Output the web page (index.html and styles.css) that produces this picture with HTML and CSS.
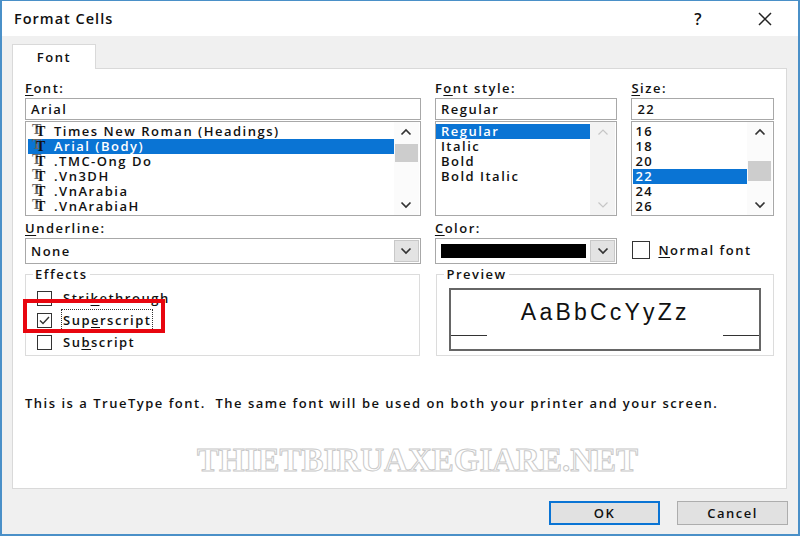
FILE: index.html
```html
<!DOCTYPE html>
<html>
	<head>
		<link rel="stylesheet" href="styles.css">
	</head>
	<body>
		<div class="window">
			<div class="titlebar">
				<span class="title">Format Cells</span>
				<span class="help">?</span>
				<span class="close">
					<svg width="14" height="14" viewBox="0 0 14 14"><path d="M1 1L13 13M13 1L1 13" stroke="#222" stroke-width="1.5" fill="none"/></svg>
				</span>
			</div>
			<div class="frame">
				<div class="tabs"><div class="tab">Font</div></div>
				<div class="panel">
					<div class="row">
						<div class="col col_font">
							<div class="label"><u>F</u>ont:</div>
							<div class="textbox">Arial</div>
							<div class="listbox">
								<ul class="items font_items">
									<li><span class="tt">T</span>Times New Roman (Headings)</li>
									<li class="sel"><span class="tt">T</span>Arial (Body)</li>
									<li><span class="tt">T</span>.TMC-Ong Do</li>
									<li><span class="tt">T</span>.Vn3DH</li>
									<li><span class="tt">T</span>.VnArabia</li>
									<li><span class="tt">T</span>.VnArabiaH</li>
								</ul>
								<div class="scrollbar">
									<div class="arrow"><svg width="12" height="8" viewBox="0 0 12 8"><polyline points="1.5,6.5 6,2 10.5,6.5" /></svg></div>
									<div class="track"><div class="thumb thumb_font"></div></div>
									<div class="arrow"><svg width="12" height="8" viewBox="0 0 12 8"><polyline points="1.5,1.5 6,6 10.5,1.5" /></svg></div>
								</div>
							</div>
						</div>
						<div class="col col_style">
							<div class="label">F<u>o</u>nt style:</div>
							<div class="textbox">Regular</div>
							<div class="listbox">
								<ul class="items style_items">
									<li class="sel">Regular</li>
									<li>Italic</li>
									<li>Bold</li>
									<li>Bold Italic</li>
								</ul>
								<div class="scrollbar disabled">
									<div class="arrow"><svg width="12" height="8" viewBox="0 0 12 8"><polyline points="1.5,6.5 6,2 10.5,6.5" /></svg></div>
									<div class="track"></div>
									<div class="arrow"><svg width="12" height="8" viewBox="0 0 12 8"><polyline points="1.5,1.5 6,6 10.5,1.5" /></svg></div>
								</div>
							</div>
						</div>
						<div class="col col_size">
							<div class="label"><u>S</u>ize:</div>
							<div class="textbox">22</div>
							<div class="listbox">
								<ul class="items size_items">
									<li>16</li>
									<li>18</li>
									<li>20</li>
									<li class="sel">22</li>
									<li>24</li>
									<li>26</li>
								</ul>
								<div class="scrollbar">
									<div class="arrow"><svg width="12" height="8" viewBox="0 0 12 8"><polyline points="1.5,6.5 6,2 10.5,6.5" /></svg></div>
									<div class="track"><div class="thumb thumb_size"></div></div>
									<div class="arrow"><svg width="12" height="8" viewBox="0 0 12 8"><polyline points="1.5,1.5 6,6 10.5,1.5" /></svg></div>
								</div>
							</div>
						</div>
					</div>

					<div class="row row_mid">
						<div class="col col_font">
							<div class="label"><u>U</u>nderline:</div>
							<div class="combo">
								<span class="combo_text">None</span>
								<span class="drop"><svg width="12" height="8" viewBox="0 0 12 8"><polyline points="1.5,1.5 6,6 10.5,1.5" /></svg></span>
							</div>
						</div>
						<div class="col col_style">
							<div class="label"><u>C</u>olor:</div>
							<div class="combo">
								<span class="swatch"></span>
								<span class="drop"><svg width="12" height="8" viewBox="0 0 12 8"><polyline points="1.5,1.5 6,6 10.5,1.5" /></svg></span>
							</div>
						</div>
						<div class="col col_size">
							<div class="check normal_font"><span class="box"></span><u>N</u>ormal font</div>
						</div>
					</div>

					<div class="row row_groups">
						<fieldset class="group effects">
							<legend>Effects</legend>
							<div class="check"><span class="box"></span>Stri<u>k</u>ethrough</div>
							<div class="check"><span class="box checked"><svg width="13" height="13" viewBox="0 0 13 13"><polyline points="2,6.5 5,9.5 11,3" /></svg></span><span class="focus">Sup<u>e</u>rscript</span></div>
							<div class="check"><span class="box"></span>Su<u>b</u>script</div>
							<div class="highlight"></div>
						</fieldset>
						<fieldset class="group preview">
							<legend>Preview</legend>
							<div class="sample">
								<span class="base base_left"></span>
								<span class="sample_text">AaBbCcYyZz</span>
								<span class="base base_right"></span>
							</div>
						</fieldset>
					</div>

					<p class="note">This is a TrueType font.&nbsp; The same font will be used on both your printer and your screen.</p>
					<div class="watermark">THIETBIRUAXEGIARE.NET</div>
				</div>
				<div class="buttons">
					<button class="btn default">OK</button>
					<button class="btn">Cancel</button>
				</div>
			</div>
		</div>
	</body>
</html>
```

FILE: styles.css
```css
html, body {
	margin: 0;
	padding: 0;
}

body {
	width: 800px;
	height: 536px;
	overflow: hidden;
	background: #f0f0f0;
	font-family: "Open Sans", "Noto Sans", sans-serif;
	font-size: 13px;
	font-weight: 600;
	letter-spacing: 1.5px;
	color: #111;
}

u {
	text-decoration: underline;
	text-underline-offset: 2px;
}

.window {
	box-sizing: border-box;
	width: 800px;
	height: 536px;
	border: 2px solid #4a90c8;
	border-top-width: 1px;
	display: flex;
	flex-direction: column;
	background: #f0f0f0;
}

.titlebar {
	height: 35px;
	background: #fff;
	display: flex;
	align-items: center;
	padding-left: 12px;
	padding-right: 26px;
}
.title {
	font-size: 14.5px;
	letter-spacing: 1px;
	flex: 1;
}
.help {
	font-size: 16px;
	margin-right: 55px;
}
.close {
	display: flex;
}

.frame {
	flex: 1;
	padding: 8px 10px 0 10px;
	display: flex;
	flex-direction: column;
}

.tabs {
	display: flex;
	position: relative;
	z-index: 1;
	margin-bottom: -1px;
}
.tab {
	box-sizing: border-box;
	width: 84px;
	height: 25px;
	background: #fff;
	border: 1px solid #d9d9d9;
	border-bottom: none;
	text-align: center;
	line-height: 25px;
}

.panel {
	box-sizing: border-box;
	width: 775px;
	height: 421px;
	background: #fff;
	border: 1px solid #d9d9d9;
	padding: 10px 12px 0 12px;
}

.row {
	display: flex;
	gap: 14px;
}
.col {
	display: flex;
	flex-direction: column;
}
.col_font {
	width: 397px;
}
.col_style {
	width: 183px;
}
.col_size {
	width: 143px;
}

.label {
	height: 19px;
	line-height: 18px;
}

.textbox {
	box-sizing: border-box;
	height: 22px;
	border: 1px solid #a8a8a8;
	line-height: 20px;
	padding-left: 5px;
}

.listbox {
	box-sizing: border-box;
	height: 95px;
	margin-top: 1px;
	border: 1px solid #a8a8a8;
	display: flex;
}

.items {
	list-style: none;
	margin: 0;
	padding: 2px 0 0 0;
	flex: 1;
}
.items li {
	height: 15px;
	line-height: 15px;
	white-space: nowrap;
	display: flex;
	align-items: center;
}
.items li.sel {
	background: #0a74d4;
	color: #fff;
}

.font_items li {
	margin-left: 2px;
	padding-left: 4px;
}
.style_items li {
	padding-left: 5px;
}
.size_items li {
	margin-left: 1px;
	padding-left: 2px;
}

/* TrueType icon: one glyph, its twin drawn as a shadow */
.tt {
	width: 22px;
	font-family: "Liberation Serif", serif;
	font-weight: bold;
	font-size: 14px;
	line-height: 15px;
	letter-spacing: 0;
	color: #111;
	padding-left: 4px;
	box-sizing: border-box;
	text-shadow: -4px -2px 0 #666;
}

.scrollbar {
	width: 25px;
	margin-right: 1px;
	display: flex;
	flex-direction: column;
	background: #fbfbfb;
}
.scrollbar.disabled {
	background: #f3f3f3;
}
.arrow {
	height: 20px;
	display: flex;
	align-items: center;
	justify-content: center;
}
.arrow polyline, .drop polyline {
	fill: none;
	stroke: #333;
	stroke-width: 1.7;
}
.disabled .arrow polyline {
	stroke: #c6c6c6;
	stroke-width: 1.2;
}
.track {
	flex: 1;
}
.thumb {
	background: #cdcdcd;
	margin: 0 1px;
}
.thumb_font {
	margin-top: 2px;
	height: 18px;
}
.thumb_size {
	margin-top: 19px;
	height: 20px;
}

.row_mid {
	margin-top: 3px;
}
.combo {
	box-sizing: border-box;
	height: 26px;
	border: 1px solid #a8a8a8;
	display: flex;
	align-items: center;
	padding: 1px;
}
.combo_text {
	flex: 1;
	padding-left: 4px;
}
.swatch {
	flex: 1;
	height: 14px;
	margin: 0 4px 0 4px;
	background: #000;
}
.drop {
	box-sizing: border-box;
	width: 25px;
	height: 22px;
	background: #e3e3e3;
	border: 1px solid #c8c8c8;
	display: flex;
	align-items: center;
	justify-content: center;
}

.check {
	display: flex;
	align-items: center;
	height: 22px;
}
.box {
	box-sizing: border-box;
	width: 15px;
	height: 15px;
	border: 1px solid #333;
	background: #fff;
	margin-right: 11px;
	display: flex;
	align-items: center;
	justify-content: center;
}
.box polyline {
	fill: none;
	stroke: #333;
	stroke-width: 1.4;
}
.normal_font {
	margin-top: 18px;
	height: 26px;
}
.normal_font .box {
	width: 18px;
	height: 18px;
	margin-left: 1px;
	margin-right: 8px;
}

.row_groups {
	margin-top: 1px;
	gap: 16px;
}
.group {
	position: relative;
	box-sizing: border-box;
	margin: 0;
	min-width: 0;
	border: 1px solid #dcdcdc;
	padding: 0;
	height: 91px;
}
.group legend {
	padding: 0 2px;
	line-height: 18px;
}
.effects {
	width: 396px;
	padding: 4px 0 0 11px;
}
.effects legend {
	margin-left: -4px;
}
.effects .check {
	height: 22px;
}
.focus {
	outline: 1px dotted #333;
	outline-offset: 1px;
}
.highlight {
	position: absolute;
	left: -3px;
	top: 16px;
	width: 134px;
	height: 26px;
	border: 4px solid #e8060f;
}

.preview {
	width: 338px;
	padding: 5px 12px 4px 12px;
}
.preview legend {
	margin-left: -5px;
}
.sample {
	box-sizing: border-box;
	height: 63px;
	border: 2px solid #666;
	position: relative;
	display: flex;
	justify-content: center;
}
.sample_text {
	font-family: "Liberation Sans", Arial, sans-serif;
	font-weight: normal;
	font-size: 23px;
	letter-spacing: 3.2px;
	color: #111;
	margin-top: 9px;
}
.base {
	position: absolute;
	top: 45px;
	width: 36px;
	border-top: 1.5px solid #333;
}
.base_left {
	left: 0;
}
.base_right {
	right: 0;
}

.note {
	margin: 38px 0 0 0;
	line-height: 18px;
}

.watermark {
	margin: 33px 0 0 172px;
	font-family: "Liberation Serif", serif;
	font-weight: bold;
	font-size: 33px;
	letter-spacing: 0;
	color: #fff;
	-webkit-text-stroke: 1px #c9c9c9;
	line-height: 30px;
}

.buttons {
	display: flex;
	justify-content: flex-end;
	gap: 17px;
	padding: 12px 0 0 0;
}
.btn {
	box-sizing: border-box;
	width: 111px;
	height: 24px;
	background: #e1e1e1;
	border: 1px solid #adadad;
	font-family: "Open Sans", "Noto Sans", sans-serif;
	font-size: 13px;
	font-weight: 600;
	letter-spacing: 1.5px;
	color: #111;
	padding: 0;
}
.btn.default {
	border: 2px solid #0a74d4;
}
```
